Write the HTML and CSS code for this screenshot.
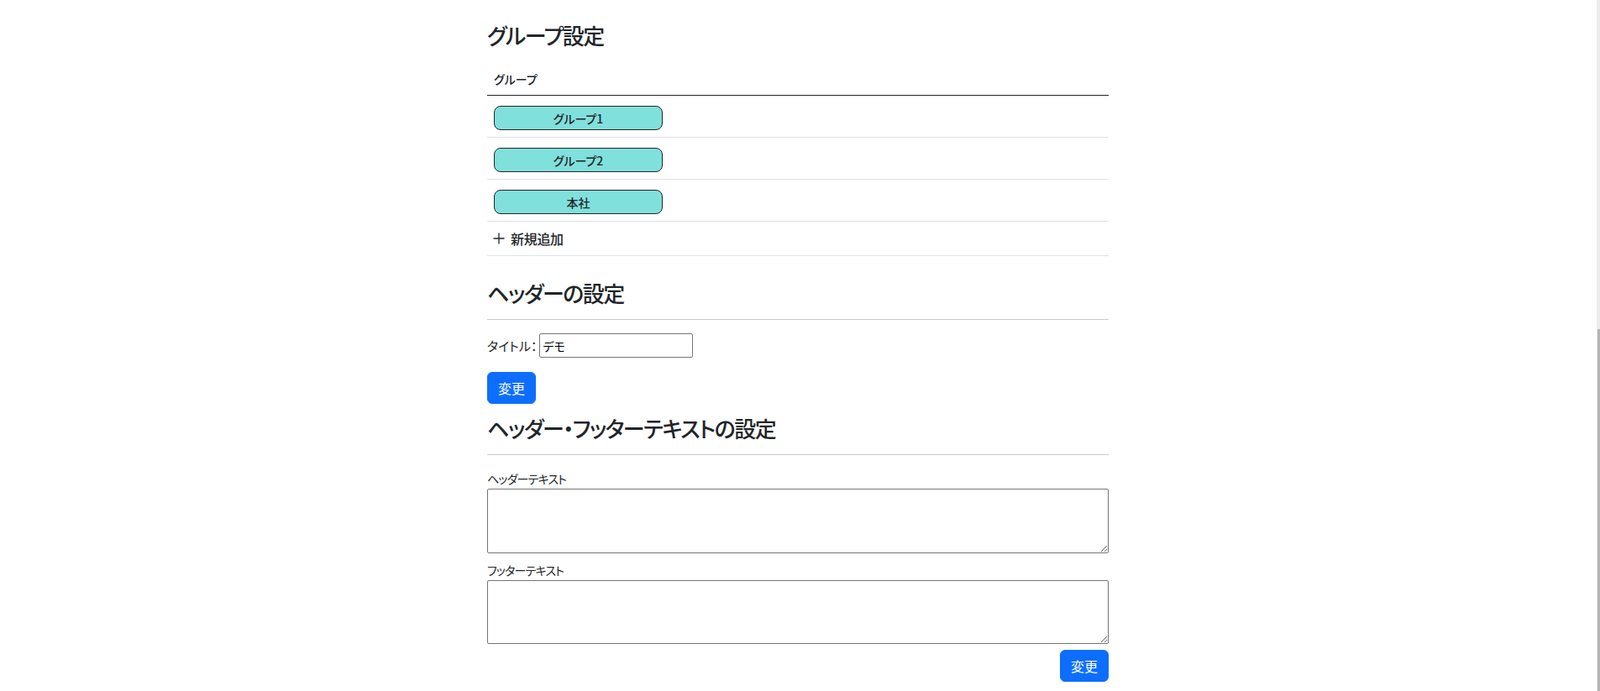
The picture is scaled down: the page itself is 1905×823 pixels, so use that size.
FILE: index.html
```html
<!DOCTYPE html>
<html lang="ja">
<head>
<meta charset="utf-8">
<title>設定</title>
<link rel="stylesheet" href="styles.css">
</head>
<body>
<div class="page">
  <main class="content">
    <section class="section">
      <h2 class="title title-first">グループ設定</h2>
      <table class="group-table">
        <thead>
          <tr><th>グループ</th></tr>
        </thead>
        <tbody>
          <tr><td class="badge-cell"><span class="group-badge">グループ1</span></td></tr>
          <tr><td class="badge-cell"><span class="group-badge">グループ2</span></td></tr>
          <tr><td class="badge-cell"><span class="group-badge">本社</span></td></tr>
          <tr><td class="add-cell">
            <span class="add-link">
              <svg class="plus-icon" viewBox="0 0 14 14" width="14" height="14" aria-hidden="true">
                <path d="M7 0.5V13.5M0.5 7H13.5" stroke="#212529" stroke-width="1.3" fill="none"/>
              </svg>
              <span>新規追加</span>
            </span>
          </td></tr>
        </tbody>
      </table>
    </section>

    <section class="section">
      <h2 class="title title-second">ヘッダーの設定</h2>
      <hr class="rule">
      <div class="field-row">
        <label class="inline-label" for="title">タイトル：</label>
        <input class="text-input" id="title" type="text" value="デモ">
      </div>
      <button class="btn btn-first" type="button">変更</button>
    </section>

    <section class="section">
      <h2 class="title title-third">ヘッダー・フッターテキストの設定</h2>
      <hr class="rule">
      <label class="block-label label-first" for="header-text">ヘッダーテキスト</label>
      <textarea class="text-area" id="header-text"></textarea>
      <label class="block-label label-second" for="footer-text">フッターテキスト</label>
      <textarea class="text-area text-area-second" id="footer-text"></textarea>
      <div class="actions">
        <button class="btn" type="button">変更</button>
      </div>
    </section>
  </main>
</div>
<div class="scrollbar"><div class="scroll-thumb"></div></div>
</body>
</html>
```

FILE: styles.css
```css
html, body {
  margin: 0;
  padding: 0;
  background: #ffffff;
}

body {
  font-family: "Noto Sans CJK JP", "Noto Sans", sans-serif;
  font-feature-settings: "palt";
  color: #212529;
  font-size: 16px;
  line-height: 24px;
}

.page {
  display: flex;
  justify-content: center;
  padding-right: 5px;
}

.content {
  width: 740px;
}

.title {
  margin: 0;
  font-size: 26px;
  letter-spacing: -1.5px;
  line-height: 34px;
  font-weight: 500;
}

.title-first {
  margin-top: 25px;
  margin-bottom: 15px;
}

.title-second {
  margin-top: 27px;
}

.title-third {
  margin-top: 12px;
}

.group-table {
  width: 100%;
  border-collapse: collapse;
}

.group-table th {
  text-align: left;
  font-weight: 500;
  font-size: 14px;
  padding: 8px 8px 7px;
  line-height: 24px;
  border-bottom: 1px solid #212529;
}

.group-table td {
  border-bottom: 1px solid #dee2e6;
  padding: 0 8px;
}

.badge-cell {
  height: 49px;
  padding-top: 12px !important;
  padding-bottom: 8px !important;
  vertical-align: top;
  box-sizing: border-box;
}

.group-badge {
  display: flex;
  align-items: center;
  justify-content: center;
  width: 201px;
  height: 29px;
  box-sizing: border-box;
  border: 1px solid #212529;
  border-radius: 8px;
  background: #80e0dc;
  font-size: 14px;
  font-weight: 500;
}

.add-cell {
  padding: 8px 7px !important;
  line-height: 24px;
}

.add-link {
  display: flex;
  align-items: center;
  gap: 7px;
  font-size: 16px;
  font-weight: 500;
  letter-spacing: -0.3px;
}

.plus-icon {
  display: block;
}

.rule {
  margin: 14px 0 0;
  border: 0;
  border-top: 1px solid #cbcbcb;
  height: 0;
}

.field-row {
  display: flex;
  align-items: center;
  margin-top: 16px;
  height: 29px;
}

.inline-label {
  font-size: 15px;
  margin-right: 3px;
}

.text-input {
  width: 183px;
  height: 29px;
  box-sizing: border-box;
  border: 1px solid #767676;
  border-radius: 2px;
  padding: 1px 3px;
  font-family: "Noto Sans CJK JP", sans-serif;
  font-feature-settings: "palt";
  font-size: 14px;
  color: #000;
}

.btn {
  display: inline-block;
  background: #0d6efd;
  color: #ffffff;
  border: 1px solid #0d6efd;
  border-radius: 6px;
  padding: 6px 0;
  font-family: "Noto Sans CJK JP", sans-serif;
  font-size: 16px;
  line-height: 24px;
  height: 38px;
  width: 58px;
  box-sizing: border-box;
  text-align: center;
}

.btn-first {
  margin-top: 17px;
  display: block;
}

.block-label {
  display: block;
  font-size: 14px;
  letter-spacing: -0.8px;
  line-height: 24px;
}

.label-first {
  margin-top: 16px;
}

.label-second {
  margin-top: 8px;
}

.text-area {
  display: block;
  width: 740px;
  height: 77px;
  box-sizing: border-box;
  border: 1px solid #767676;
  border-radius: 2px;
  margin: 0;
  resize: vertical;
  font-family: "Noto Sans CJK JP", sans-serif;
}

.text-area-second {
  height: 76px;
}

.actions {
  display: flex;
  justify-content: flex-end;
  margin-top: 7px;
}

.scrollbar {
  position: fixed;
  top: 0;
  right: 0;
  width: 4px;
  height: 100%;
  background: #ececec;
}

.scroll-thumb {
  position: absolute;
  top: 392px;
  right: 0;
  width: 3px;
  bottom: 0;
  background: #b4b4b4;
}
```
